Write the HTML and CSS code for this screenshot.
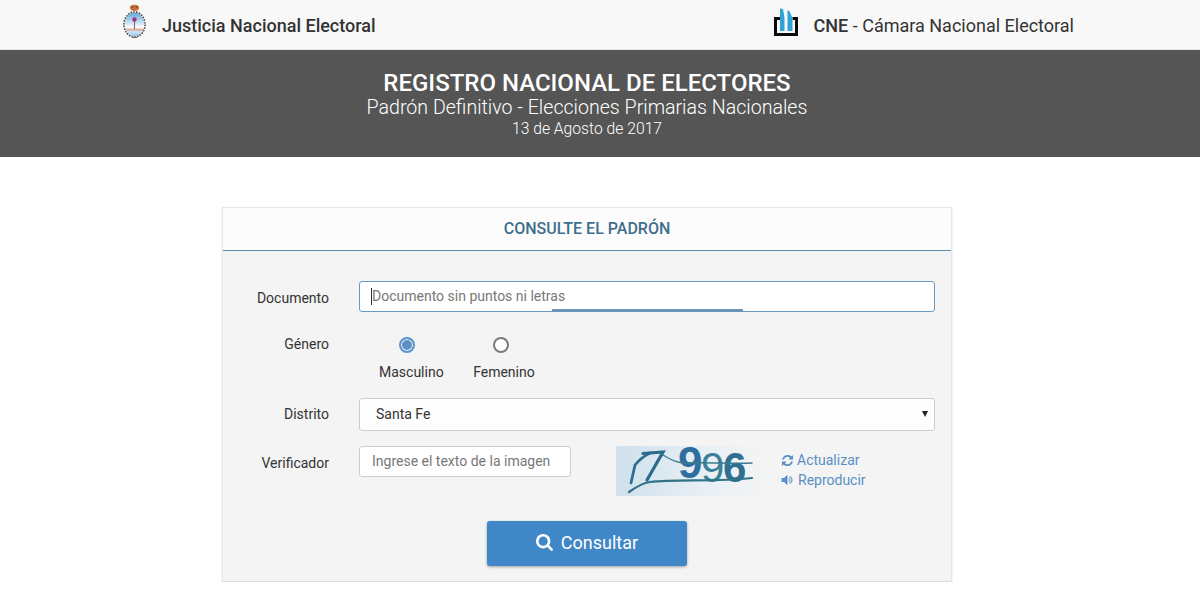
FILE: index.html
```html
<!DOCTYPE html>
<html lang="es">
<head>
<meta charset="utf-8">
<title>Registro Nacional de Electores</title>
<link rel="stylesheet" href="styles.css">
</head>
<body>
<header class="topbar">
  <div class="brand">
    <svg class="emblem" width="25" height="35" viewBox="0 0 25 35">
      <defs>
        <linearGradient id="shield" x1="0" y1="0" x2="0" y2="1">
          <stop offset="0" stop-color="#5fa8dc"/>
          <stop offset=".45" stop-color="#cfe6f5"/>
          <stop offset=".62" stop-color="#fff"/>
          <stop offset=".72" stop-color="#d8a898"/>
          <stop offset=".8" stop-color="#cfe6f5"/>
          <stop offset="1" stop-color="#8fc2e6"/>
        </linearGradient>
      </defs>
      <ellipse cx="12.5" cy="3.8" rx="4.6" ry="3.1" fill="#c9713c"/>
      <circle cx="10.5" cy="3" r="1" fill="#8d4a22"/>
      <circle cx="14.5" cy="3" r="1" fill="#8d4a22"/>
      <ellipse cx="12.5" cy="20.5" rx="10" ry="12" fill="url(#shield)"/>
      <ellipse cx="12.5" cy="20.5" rx="10.6" ry="12.6" fill="none" stroke="#4c4a3a" stroke-width="1.5" stroke-dasharray="1.6 1.2"/>
      <circle cx="12.5" cy="15.5" r="2.2" fill="#a0307c"/>
      <path d="M12.5 17v8" stroke="#8a5a6a" stroke-width="1"/>
      <path d="M10 33.5h5" stroke="#6b6b5e" stroke-width="1"/>
    </svg>
    <span class="brand-strong">Justicia Nacional Electoral</span>
  </div>
  <div class="brand brand-cne">
    <svg class="cne-logo" width="25" height="29" viewBox="0 0 25 29">
      <path d="M6 11.500H1.500v16h21v-16H18.500" fill="none" stroke="#0b0b0b" stroke-width="3"/>
      <path d="M6 1.500L9 2C9.500 5 10.500 9 10.500 12V24H6z" fill="#2ea3d4"/>
      <path d="M13.500 3.500L15.500 4C16 7 18.500 9 18.500 13V24h-5z" fill="#2ea3d4"/>
    </svg>
    <span class="cne-text"><b class="brand-strong">CNE</b> - Cámara Nacional Electoral</span>
  </div>
</header>

<section class="banner">
  <h1 class="banner-title">REGISTRO NACIONAL DE ELECTORES</h1>
  <p class="banner-sub">Padrón Definitivo - Elecciones Primarias Nacionales</p>
  <p class="banner-date">13 de Agosto de 2017</p>
</section>

<main class="content">
  <form class="panel">
    <h2 class="panel-head">CONSULTE EL PADRÓN</h2>
    <div class="panel-body">
      <div class="row row-doc">
        <label class="label label-input" for="doc">Documento</label>
        <div class="field">
          <input class="input input-focus" id="doc" type="text" placeholder="Documento sin puntos ni letras">
          <span class="caret"></span>
          <span class="loadbar"></span>
        </div>
      </div>

      <div class="row row-gender">
        <span class="label label-gender">Género</span>
        <div class="radios">
          <label class="radio-opt">
            <span class="radio radio-on"></span>
            <span class="radio-text">Masculino</span>
          </label>
          <label class="radio-opt">
            <span class="radio radio-off"></span>
            <span class="radio-text">Femenino</span>
          </label>
        </div>
      </div>

      <div class="row row-district">
        <label class="label label-select" for="dist">Distrito</label>
        <div class="field">
          <select class="select" id="dist">
            <option>Santa Fe</option>
          </select>
          <span class="select-arrow"></span>
        </div>
      </div>

      <div class="row row-captcha">
        <label class="label label-input" for="cap">Verificador</label>
        <div class="captcha-line">
          <input class="input input-cap" id="cap" type="text" placeholder="Ingrese el texto de la imagen">
          <svg class="captcha" width="149" height="50" viewBox="0 0 149 50">
            <defs>
              <linearGradient id="capbg" x1="0" y1="0" x2="1" y2="0">
                <stop offset="0" stop-color="#cfe0ec"/>
                <stop offset=".6" stop-color="#e8f0f5"/>
                <stop offset="1" stop-color="#f4f4f4"/>
              </linearGradient>
            </defs>
            <rect width="149" height="50" rx="2" fill="url(#capbg)"/>
            <text class="cap-digits"><tspan class="cap-a" x="62" y="32">9</tspan><tspan class="cap-b" x="85" y="36">9</tspan><tspan class="cap-c" x="107" y="36">6</tspan></text>
            <g fill="none" stroke-linecap="round">
              <path d="M15 37L19 19C23 14 28 10 34 7" stroke="#2f6f8f" stroke-width="2.800"/>
              <path d="M27 7.500L47 6L31 34" stroke="#2b6a8c" stroke-width="3.200"/>
              <path d="M13 46C20 41 27 37 34 36C60 33 100 36 136 32" stroke="#2f7389" stroke-width="2.200"/>
              <path d="M47 9C54 13 60 17 70 17C90 16 120 18 136 17" stroke="#3b7c92" stroke-width="1.400"/>
            </g>
          </svg>
          <div class="captcha-links">
            <a class="link" href="#">
              <svg class="link-icon" width="13" height="13" viewBox="0 0 1792 1792"><path fill="currentColor" d="M1639 1056q0 5-1 7-64 268-268 434.500t-478 166.500q-146 0-282.500-55t-243.500-157l-129 129q-19 19-45 19t-45-19-19-45v-448q0-26 19-45t45-19h448q26 0 45 19t19 45-19 45l-137 137q71 66 161 102t187 36q134 0 250-65t186-179q11-17 53-117 8-23 30-23h192q13 0 22.500 9.500t9.500 22.500zm25-800v448q0 26-19 45t-45 19h-448q-26 0-45-19t-19-45 19-45l138-138q-148-137-349-137-134 0-250 65t-186 179q-11 17-53 117-8 23-30 23h-199q-13 0-22.500-9.500t-9.500-22.500v-7q65-268 270-434.500t480-166.500q146 0 284 55.500t245 156.500l130-129q19-19 45-19t45 19 19 45z"/></svg>Actualizar
            </a>
            <a class="link" href="#">
              <svg class="link-icon" width="14" height="14" viewBox="0 0 1792 1792"><path fill="currentColor" d="M832 352v1088q0 26-19 45t-45 19-45-19l-333-333h-262q-26 0-45-19t-19-45v-384q0-26 19-45t45-19h262l333-333q19-19 45-19t45 19 19 45zm384 544q0 76-42.500 141.500t-112.500 93.500q-10 5-25 5-26 0-45-18.500t-19-45.500q0-21 12-35.500t29-25 34-23 29-36 12-56.500-12-56.500-29-36-34-23-29-25-12-35.500q0-27 19-45.500t45-18.500q15 0 25 5 70 27 112.500 93t42.500 142zm256 0q0 153-85 282.500t-225 188.500q-13 5-25 5-27 0-46-19t-19-45q0-39 39-59 56-29 76-44 74-54 115.500-135.500t41.500-173.500-41.500-173.500-115.500-135.500q-20-15-76-44-39-20-39-59 0-26 19-45t45-19q13 0 26 5 140 59 225 188.500t85 282.500z"/></svg>Reproducir
            </a>
          </div>
        </div>
      </div>

      <div class="actions">
        <button class="btn" type="button">
          <svg class="btn-icon" width="17" height="17" viewBox="0 0 1664 1664"><path fill="currentColor" d="M1152 704q0-185-131.500-316.500t-316.500-131.500-316.500 131.500-131.500 316.500 131.500 316.500 316.500 131.500 316.500-131.500 131.500-316.500zm512 832q0 52-38 90t-90 38q-54 0-90-38l-343-342q-179 124-399 124-143 0-273.500-55.500t-225-150-150-225-55.500-273.500 55.500-273.500 150-225 225-150 273.500-55.500 273.500 55.500 225 150 150 225 55.500 273.500q0 220-124 399l343 343q37 37 37 90z"/></svg>
          Consultar
        </button>
      </div>
    </div>
  </form>
</main>
</body>
</html>
```

FILE: styles.css
```css
* { box-sizing: border-box; }

html, body {
  margin: 0;
  padding: 0;
  background: #fff;
  overflow: hidden;
}

body {
  font-family: Roboto, "Liberation Sans", sans-serif;
  color: #333;
  font-size: 14px;
}

/* Top bar */
.topbar {
  height: 50px;
  background: #f8f8f8;
  border-bottom: 1px solid #e7e7e7;
  display: flex;
  justify-content: space-between;
  align-items: center;
  padding: 2px 126px 0 122px;
}

.brand {
  display: flex;
  align-items: center;
  font-size: 18px;
  color: #333;
}

.brand-strong { font-weight: 500; }

.emblem { margin: -8px 15px 0 0; }

.cne-logo { margin: -8px 15px 0 0; }

.cne-text { color: #333; font-size: 18px; }

/* Banner */
.banner {
  height: 107px;
  background: #555;
  color: #fff;
  text-align: center;
  padding: 20px 26px 0 0;
}

.banner-title {
  margin: 0;
  font-size: 24px;
  line-height: 27px;
  font-weight: 500;
}

.banner-sub {
  margin: 0;
  font-size: 19.6px;
  line-height: 22px;
  font-weight: 300;
}

.banner-date {
  margin: 0;
  font-size: 15.7px;
  line-height: 20px;
  font-weight: 300;
}

/* Panel */
.content {
  padding: 50px 26px 0 0;
}

.panel {
  width: 730px;
  margin: 0 auto;
  background: #f4f4f4;
  border: 1px solid #e6e6e6;
  border-bottom-color: #dcdcdc;
  box-shadow: 0 1px 2px rgba(0, 0, 0, .12);
}

.panel-head {
  margin: 0;
  height: 43px;
  background: #fcfcfc;
  border-bottom: 1px solid #5f8ea8;
  color: #3e6f8c;
  font-size: 16px;
  font-weight: 500;
  line-height: 41px;
  text-align: center;
}

.panel-body {
  padding: 30px 16px 15px 0;
}

.row {
  display: grid;
  grid-template-columns: 106px 1fr;
  column-gap: 30px;
}

.row-doc { margin-bottom: 22px; }
.row-gender { margin-bottom: 17px; }
.row-district { margin-bottom: 15px; }
.row-captcha { margin-bottom: 25px; }

.label {
  text-align: right;
  font-weight: 400;
  font-size: 14px;
  color: #333;
}

.label-input { line-height: 31px; padding-top: 2px; }
.label-select { line-height: 33px; }
.label-gender { line-height: 16px; }

.field { position: relative; }

.input {
  display: block;
  height: 31px;
  padding: 0 12px;
  background: #fff;
  border: 1px solid #ccc;
  border-radius: 3px;
  font: 14px Roboto, "Liberation Sans", sans-serif;
  color: #333;
  outline: none;
}

.input::placeholder { color: #777; opacity: 1; }

.input-focus {
  width: 100%;
  border-color: #6a9ac4;
  padding-bottom: 2px;
}

.input-cap { width: 212px; padding-bottom: 2px; }

.caret {
  position: absolute;
  left: 12px;
  top: 7px;
  width: 1px;
  height: 17px;
  background: #333;
}

.loadbar {
  position: absolute;
  left: 193px;
  top: 28px;
  width: 191px;
  height: 3px;
  background: #6a93b8;
}

/* Radios */
.radios {
  display: flex;
  padding-left: 20px;
  gap: 29.5px;
}

.radio-opt {
  display: flex;
  flex-direction: column;
  font-size: 14px;
  color: #333;
}

.radio {
  width: 16px;
  height: 16px;
  margin-top: 1px;
  border-radius: 50%;
  background: #fff;
  border: 2px solid #7b7b7b;
}

.radio-on {
  margin-left: 20px;
  border-color: #5a95cf;
  background: #5f8fc0;
  box-shadow: inset 0 0 0 1px #fff;
}

.radio-off { margin-left: 19.5px; }

.radio-text {
  margin-top: 10px;
  line-height: 18px;
}

/* Select */
.select {
  display: block;
  width: 100%;
  height: 33px;
  padding: 0 16px 2px;
  background: #fdfdfd;
  border: 1px solid #ccc;
  border-radius: 3px;
  appearance: none;
  font: 14px Roboto, "Liberation Sans", sans-serif;
  color: #333;
  outline: none;
}

.select-arrow {
  position: absolute;
  right: 7px;
  top: 13px;
  width: 0;
  height: 0;
  border-left: 3px solid transparent;
  border-right: 3px solid transparent;
  border-top: 6px solid #222;
}

/* Captcha */
.captcha-line {
  display: flex;
  align-items: flex-start;
}

.captcha { margin-left: 45px; flex: none; overflow: visible; }

.cap-digits {
  font-family: "Liberation Sans", Arial, sans-serif;
}

.cap-a { font-size: 44px; font-weight: 700; fill: #2f6f9f; }
.cap-b { font-size: 42px; font-weight: 400; fill: #3a8098; }
.cap-c { font-size: 42px; font-weight: 700; fill: #2d7090; }

.captcha-links {
  margin: 4px 0 0 16px;
  display: flex;
  flex-direction: column;
}

.link {
  display: flex;
  align-items: center;
  height: 20px;
  color: #5a8fc4;
  font-size: 14px;
  text-decoration: none;
  white-space: nowrap;
}

.link-icon { margin-right: 3px; }

/* Button */
.actions {
  display: flex;
  justify-content: center;
  padding-left: 16px;
}

.btn {
  width: 200px;
  height: 45px;
  padding: 0 0 2px;
  display: flex;
  align-items: center;
  justify-content: center;
  gap: 8px;
  background: #3f87c7;
  color: #fff;
  border: 0;
  border-radius: 3px;
  box-shadow: 0 1px 3px rgba(0, 0, 0, .35);
  font: 18px Roboto, "Liberation Sans", sans-serif;
}
```
